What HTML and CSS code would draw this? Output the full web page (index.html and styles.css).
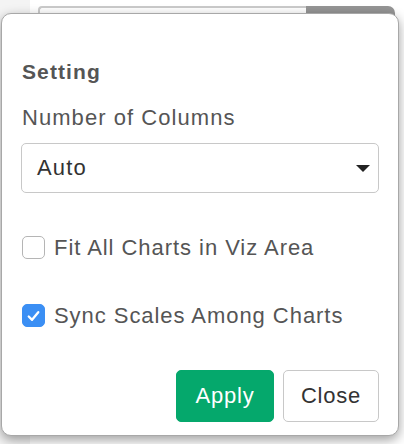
FILE: index.html
```html
<!DOCTYPE html>
<html>
<head>
<meta charset="utf-8">
<link rel="stylesheet" href="styles.css">
</head>
<body>
<div class="page">
  <div class="sidebar"></div>
  <div class="main">
    <div class="input-group">
      <div class="fake-input"></div>
      <div class="fake-btn"></div>
    </div>
  </div>
</div>
<div class="popover">
  <div class="title">Setting</div>
  <div class="label">Number of Columns</div>
  <div class="select">
    <span class="select-text">Auto</span>
    <span class="caret"></span>
  </div>
  <div class="check-row first">
    <span class="box"></span>
    <span class="check-label">Fit All Charts in Viz Area</span>
  </div>
  <div class="check-row second">
    <span class="box checked">
      <svg viewBox="0 0 22 22" width="22" height="22"><path d="M6 11.5 L9.5 15 L16 7" fill="none" stroke="#fff" stroke-width="2.4" stroke-linecap="round" stroke-linejoin="round"/></svg>
    </span>
    <span class="check-label">Sync Scales Among Charts</span>
  </div>
  <div class="actions">
    <button class="btn apply">Apply</button>
    <button class="btn close">Close</button>
  </div>
</div>
</body>
</html>
```

FILE: styles.css
```css
html, body {
  margin: 0;
  padding: 0;
  height: 100%;
}
body {
  background: #fff;
  font-family: "Liberation Sans", Arial, sans-serif;
  overflow: hidden;
}
.page {
  display: flex;
  height: 100%;
}
.sidebar {
  width: 30px;
  background: #f4f4f4;
}
.main {
  flex: 1;
  padding: 6px 0 0 8px;
}
.input-group {
  display: flex;
  width: 357px;
  height: 30px;
}
.fake-input {
  flex: 1;
  border: 2px solid #cbcbcb;
  border-right: none;
  border-radius: 4px 0 0 4px;
  background: #fff;
}
.fake-btn {
  width: 89px;
  background: #959595;
  border-radius: 0 7px 0 0;
}
.popover {
  position: absolute;
  left: 1px;
  top: 13px;
  width: 398px;
  height: 423px;
  box-sizing: border-box;
  background: #fff;
  border: 1px solid #a8a8a8;
  border-radius: 10px;
  box-shadow: 0 4px 12px rgba(0, 0, 0, 0.38);
  padding: 0 19px;
  display: flex;
  flex-direction: column;
  color: #555;
}
.title {
  margin-top: 47px;
  font-size: 21px;
  font-weight: bold;
  letter-spacing: 1.1px;
  line-height: 22px;
  padding-left: 1px;
}
.label {
  margin-top: 24px;
  font-size: 22px;
  letter-spacing: 1.05px;
  line-height: 22px;
  padding-left: 1px;
}
.select {
  margin-top: 14px;
  height: 50px;
  box-sizing: border-box;
  border: 1px solid #c8c8c8;
  border-radius: 5px;
  display: flex;
  align-items: center;
  justify-content: space-between;
  padding: 0 8px 0 15px;
}
.select-text {
  font-size: 22px;
  letter-spacing: 1.2px;
  color: #333;
}
.caret {
  width: 0;
  height: 0;
  border-left: 7px solid transparent;
  border-right: 7px solid transparent;
  border-top: 7px solid #222;
}
.check-row {
  display: flex;
  align-items: center;
  gap: 9px;
  height: 23px;
  padding-left: 1px;
}
.check-row.first {
  margin-top: 43px;
}
.check-row.second {
  margin-top: 45px;
}
.box {
  width: 23px;
  height: 23px;
  flex: none;
  box-sizing: border-box;
  border: 1px solid #b5b5b5;
  border-radius: 5px;
  background: #fff;
  display: flex;
  align-items: center;
  justify-content: center;
}
.box.checked {
  background: #3b8ff4;
  border-color: #3b8ff4;
}
.check-label {
  font-size: 22px;
  letter-spacing: 0.95px;
  color: #555;
  white-space: nowrap;
}
.actions {
  margin-top: 43px;
  display: flex;
  justify-content: flex-end;
  gap: 9px;
}
.btn {
  height: 52px;
  border-radius: 5px;
  font-family: "Liberation Sans", Arial, sans-serif;
  font-size: 22px;
  letter-spacing: 0.8px;
  padding: 0;
  cursor: pointer;
}
.apply {
  width: 98px;
  background: #05a86c;
  border: 1px solid #05a86c;
  color: #fff;
}
.close {
  width: 96px;
  background: #fff;
  border: 1px solid #c8c8c8;
  color: #333;
}
```
